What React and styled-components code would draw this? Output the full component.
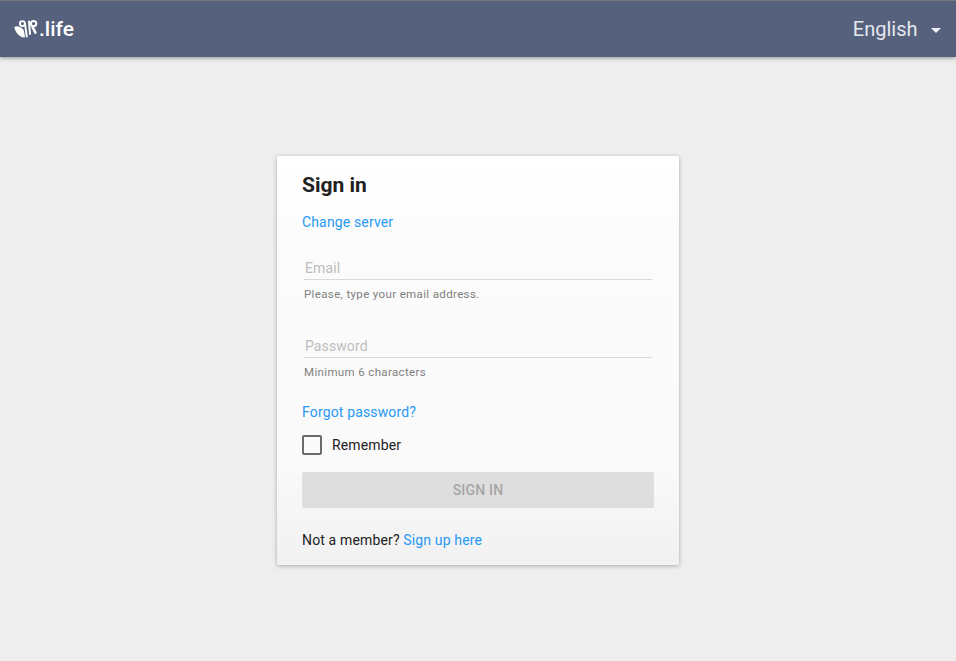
import React from "react";
import styled, { createGlobalStyle } from "styled-components";

const GlobalStyle = createGlobalStyle`
  html, body {
    margin: 0;
    padding: 0;
    height: 100%;
    background: #eeeeee;
    font-family: Roboto, "Liberation Sans", sans-serif;
    -webkit-font-smoothing: antialiased;
  }
`;

const Page = styled.div`
  height: 661px;
  overflow: hidden;
  display: flex;
  flex-direction: column;
`;

const Header = styled.header`
  height: 57px;
  flex: none;
  box-sizing: border-box;
  border-top: 1px solid #77797f;
  background: #56617e;
  box-shadow: 0 1px 4px rgba(0, 0, 0, 0.4);
  display: flex;
  align-items: center;
  justify-content: space-between;
  padding: 0 15px 0 14px;
`;

const Logo = styled.div`
  display: flex;
  align-items: center;
  gap: 1px;
  color: #fff;
  font-size: 21px;
  font-weight: 500;
`;

const Language = styled.div`
  display: flex;
  align-items: center;
  gap: 13.5px;
  color: #e6e8ee;
  font-size: 20px;
`;

const Caret = styled.span`
  width: 0;
  height: 0;
  margin-top: 3px;
  border-left: 5px solid transparent;
  border-right: 5px solid transparent;
  border-top: 5px solid #f2f3f6;
`;

const Main = styled.main`
  display: flex;
  justify-content: center;
  padding-top: 99px;
`;

const Card = styled.section`
  width: 402px;
  height: 409px;
  box-sizing: border-box;
  padding: 0 25px;
  border-radius: 2px;
  background: linear-gradient(180deg, #ffffff 0%, #fbfbfb 25%, #fafafa 75%, #f1f1f1 100%);
  box-shadow: 0 1px 4px rgba(0, 0, 0, 0.3);
  color: #212121;
`;

const Title = styled.h1`
  margin: 16px 0 0;
  font-size: 21px;
  line-height: 26px;
  font-weight: 700;
`;

const LinkText = styled.a`
  color: #2699f5;
  font-size: 14px;
  line-height: 20px;
  letter-spacing: 0.15px;
`;

const LinkRow = styled.div`
  display: flex;
  height: 20px;
  margin-top: ${(p) => p.$top}px;
`;

const Field = styled.div`
  margin-top: ${(p) => p.$top}px;
  padding: 0 2px;
`;

const Input = styled.input`
  display: block;
  width: 100%;
  height: 24px;
  box-sizing: border-box;
  margin: 0;
  padding: 0 0 0 1px;
  border: 0;
  border-bottom: 1px solid #d9d9d9;
  background: transparent;
  font-family: inherit;
  font-size: 14px;
  letter-spacing: 0.1px;
  outline: none;

  &::placeholder {
    color: #bdbdbd;
    opacity: 1;
  }
`;

const Hint = styled.div`
  margin-top: 7px;
  color: #808080;
  font-size: 11.5px;
  line-height: 15px;
  letter-spacing: 0.36px;
`;

const Remember = styled.label`
  display: flex;
  align-items: center;
  gap: 10px;
  height: 20px;
  margin-top: 13px;
  font-size: 14px;
  letter-spacing: 0.15px;
`;

const Box = styled.span`
  width: 20px;
  height: 20px;
  box-sizing: border-box;
  border: 2px solid #6b6b6b;
  border-radius: 2px;
`;

const SubmitButton = styled.button`
  display: block;
  width: 352px;
  height: 36px;
  margin-top: 17px;
  border: 0;
  border-radius: 2px;
  background: #dedede;
  color: #a6a6a6;
  font-family: inherit;
  font-size: 14px;
  font-weight: 500;
  letter-spacing: 0.2px;
`;

const Footer = styled.div`
  margin-top: 22px;
  font-size: 14px;
  line-height: 20px;
  letter-spacing: 0.15px;
`;

const Butterfly = () => (
  <svg width="24" height="21" viewBox="0 0 24 21" fill="none" stroke="#fff" strokeLinecap="round">
    <path d="M1 8.6 C3.4 7 7 8.8 9 11.4 L10.2 17.6 C6.6 17.6 2.6 14 1 8.6 Z" fill="#fff" strokeWidth="1.6" strokeLinejoin="round" />
    <circle cx="8.4" cy="4.6" r="2.5" strokeWidth="1.9" />
    <path d="M11 5 L12.8 17.6" strokeWidth="1.9" />
    <path d="M15 2.4 L16 15" strokeWidth="2" />
    <circle cx="19.6" cy="4.6" r="2.7" strokeWidth="2" />
    <path d="M18.6 8.2 L21.4 13.6" strokeWidth="2.6" />
  </svg>
);

const App = () => {
  return (
    <Page>
      <GlobalStyle />
      <Header>
        <Logo>
          <Butterfly />
          .life
        </Logo>
        <Language>
          English
          <Caret />
        </Language>
      </Header>
      <Main>
        <Card>
          <Title>Sign in</Title>
          <LinkRow $top={14}>
            <LinkText>Change server</LinkText>
          </LinkRow>
          <Field $top={24}>
            <Input placeholder="Email" />
            <Hint>Please, type your email address.</Hint>
          </Field>
          <Field $top={32}>
            <Input placeholder="Password" type="password" />
            <Hint>Minimum 6 characters</Hint>
          </Field>
          <LinkRow $top={22}>
            <LinkText>Forgot password?</LinkText>
          </LinkRow>
          <Remember>
            <Box />
            Remember
          </Remember>
          <SubmitButton disabled>SIGN IN</SubmitButton>
          <Footer>
            Not a member? <LinkText>Sign up here</LinkText>
          </Footer>
        </Card>
      </Main>
    </Page>
  );
};

export default App;
